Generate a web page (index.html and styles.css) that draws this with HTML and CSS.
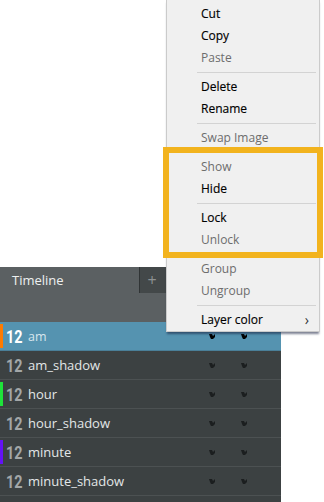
FILE: index.html
```html
<!DOCTYPE html>
<html lang="en">
<head>
    <meta charset="UTF-8">
    <title>Timeline layer menu</title>
    <link rel="stylesheet" href="styles.css">
</head>
<body>
    <div class="stage">
        <div class="timeline">
            <div class="timeline-head">
                <div class="tabs">
                    <span class="tab-title">Timeline</span>
                    <span class="tab-add">+</span>
                </div>
            </div>
            <div class="layer selected">
                <span class="swatch orange"></span>
                <span class="frame">12</span>
                <span class="name">am</span>
                <span class="toggles">
                    <svg viewBox="0 0 7 7"><path d="M0 1h3l1 2 2-2v3l-2 2H2L1 4z"/></svg>
                    <svg viewBox="0 0 7 7"><path d="M0 1h3l1 2 2-2v3l-2 2H2L1 4z"/></svg>
                </span>
            </div>
            <div class="layer">
                <span class="swatch"></span>
                <span class="frame">12</span>
                <span class="name">am_shadow</span>
                <span class="toggles">
                    <svg viewBox="0 0 7 7"><path d="M0 1h3l1 2 2-2v3l-2 2H2L1 4z"/></svg>
                    <svg viewBox="0 0 7 7"><path d="M0 1h3l1 2 2-2v3l-2 2H2L1 4z"/></svg>
                </span>
            </div>
            <div class="layer">
                <span class="swatch green"></span>
                <span class="frame">12</span>
                <span class="name">hour</span>
                <span class="toggles">
                    <svg viewBox="0 0 7 7"><path d="M0 1h3l1 2 2-2v3l-2 2H2L1 4z"/></svg>
                    <svg viewBox="0 0 7 7"><path d="M0 1h3l1 2 2-2v3l-2 2H2L1 4z"/></svg>
                </span>
            </div>
            <div class="layer">
                <span class="swatch"></span>
                <span class="frame">12</span>
                <span class="name">hour_shadow</span>
                <span class="toggles">
                    <svg viewBox="0 0 7 7"><path d="M0 1h3l1 2 2-2v3l-2 2H2L1 4z"/></svg>
                    <svg viewBox="0 0 7 7"><path d="M0 1h3l1 2 2-2v3l-2 2H2L1 4z"/></svg>
                </span>
            </div>
            <div class="layer">
                <span class="swatch purple"></span>
                <span class="frame">12</span>
                <span class="name">minute</span>
                <span class="toggles">
                    <svg viewBox="0 0 7 7"><path d="M0 1h3l1 2 2-2v3l-2 2H2L1 4z"/></svg>
                    <svg viewBox="0 0 7 7"><path d="M0 1h3l1 2 2-2v3l-2 2H2L1 4z"/></svg>
                </span>
            </div>
            <div class="layer">
                <span class="swatch"></span>
                <span class="frame">12</span>
                <span class="name">minute_shadow</span>
                <span class="toggles">
                    <svg viewBox="0 0 7 7"><path d="M0 1h3l1 2 2-2v3l-2 2H2L1 4z"/></svg>
                    <svg viewBox="0 0 7 7"><path d="M0 1h3l1 2 2-2v3l-2 2H2L1 4z"/></svg>
                </span>
            </div>
            <div class="layer"></div>
        </div>

        <ul class="context-menu">
            <li>Cut</li>
            <li>Copy</li>
            <li class="disabled">Paste</li>
            <li class="sep"></li>
            <li>Delete</li>
            <li>Rename</li>
            <li class="sep"></li>
            <li class="disabled">Swap Image</li>
            <li class="sep"></li>
            <li class="disabled">Show</li>
            <li>Hide</li>
            <li class="sep"></li>
            <li>Lock</li>
            <li class="disabled">Unlock</li>
            <li class="sep"></li>
            <li class="disabled">Group</li>
            <li class="disabled">Ungroup</li>
            <li class="sep"></li>
            <li class="submenu">Layer color<span class="arrow">&#8250;</span></li>
        </ul>

        <div class="highlight"></div>
    </div>
</body>
</html>
```

FILE: styles.css
```css
html, body {
    margin: 0;
    background: #ffffff;
    overflow: hidden;
}
.stage {
    position: relative;
    width: 324px;
    height: 502px;
    padding-top: 267px;
    box-sizing: border-box;
}
/* Timeline panel */
.timeline {
    width: 281px;
    background: #3c4142;
    font-family: "Open Sans", "Noto Sans", sans-serif;
}
.timeline-head {
    height: 55px;
    background: #5b6062;
}
.tabs {
    display: flex;
    height: 26px;
    align-items: center;
}
.tab-title {
    flex: 1;
    padding-left: 12px;
    font-size: 13px;
    color: #eef0f0;
}
.tab-add {
    width: 30px;
    height: 26px;
    margin-right: 111px;
    background: #434849;
    border-left: 1px solid #303435;
    color: #8d9192;
    font-size: 16px;
    line-height: 26px;
    text-align: center;
    text-indent: -6px;
}
.layer {
    display: flex;
    align-items: center;
    height: 28px;
    border-bottom: 1px solid #4c5152;
}
.layer.selected {
    background: #5593b0;
    border-bottom-color: #4a7f98;
}
.swatch {
    width: 3px;
    height: 24px;
    margin-right: 3px;
}
.swatch.orange { background: #ff7b00; }
.swatch.green { background: #1ee33a; }
.swatch.purple { background: #6412f5; }
.frame {
    display: inline-block;
    width: 22px;
    font-family: Roboto, sans-serif;
    font-size: 18px;
    font-weight: 700;
    color: #a3a7a8;
    transform: scaleX(0.8);
    transform-origin: left center;
}
.selected .frame {
    color: #ffffff;
}
.name {
    flex: 1;
    font-size: 13px;
    color: #e3e7e8;
}
.selected .name {
    color: #d8e6ed;
    font-size: 12.5px;
}
.toggles {
    display: flex;
    gap: 25px;
    margin-right: 33px;
}
.toggles svg {
    width: 7px;
    height: 7px;
    fill: #1b1e1f;
}
.selected .toggles svg {
    fill: #000000;
}
/* Context menu */
.context-menu {
    position: absolute;
    top: -1px;
    left: 166px;
    width: 152px;
    margin: 0;
    padding: 3px 0 0;
    list-style: none;
    background: #f0f0f0;
    border: 1px solid #cbcbcb;
    box-shadow: 0 3px 2px -1px rgba(20, 30, 60, 0.55);
    font-family: "Open Sans", "Noto Sans", sans-serif;
    font-size: 12px;
    color: #000000;
    -webkit-text-stroke: 0.15px #000000;
}
.context-menu li {
    height: 22px;
    line-height: 22px;
    padding-left: 34px;
}
.context-menu li.disabled {
    color: #6d6d6d;
    -webkit-text-stroke: 0;
}
.context-menu li.sep {
    height: 1px;
    margin: 3px 3px 3px 30px;
    padding: 0;
    background: #d3d3d3;
}
.context-menu li.submenu {
    display: flex;
    justify-content: space-between;
    padding-right: 10px;
}
.arrow {
    font-size: 14px;
    color: #333333;
    -webkit-text-stroke: 0;
}
/* Annotation box */
.highlight {
    position: absolute;
    top: 147px;
    left: 163px;
    width: 148px;
    height: 99px;
    border: 6px solid #f2b31e;
}
```
